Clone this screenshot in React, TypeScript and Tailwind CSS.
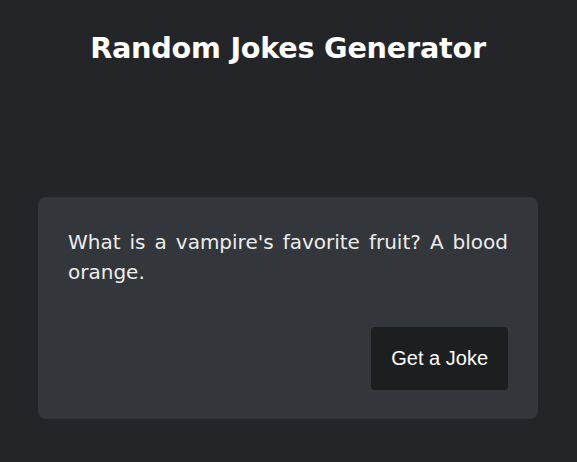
export default function App() {
  return (
    <div className="min-h-[462px] bg-[#242528] pt-[26px] pl-[38px] pr-[39px] pb-[43px] font-['DejaVu_Sans',sans-serif] text-white">
      <h1 className="text-center text-[28.7px] leading-[44px] font-bold tracking-[-0.25px]">
        Random Jokes Generator
      </h1>

      {/* Joke card */}
      <div className="mt-[127px] bg-[#33363b] rounded-lg px-[30px] pt-[30px] pb-[29px] flex flex-col">
        <p className="text-[20px] leading-[30px] font-normal text-justify text-[#ededed] min-h-[70px]">
          What is a vampire's favorite fruit? A blood orange.
        </p>
        <div className="flex justify-end mt-[30px]">
          <button className="bg-[#1c1e20] rounded-[4px] px-[20px] py-[20px] text-[20px] leading-[23px] font-['Liberation_Sans',Arial,sans-serif] text-white">
            Get a Joke
          </button>
        </div>
      </div>
    </div>
  );
}
